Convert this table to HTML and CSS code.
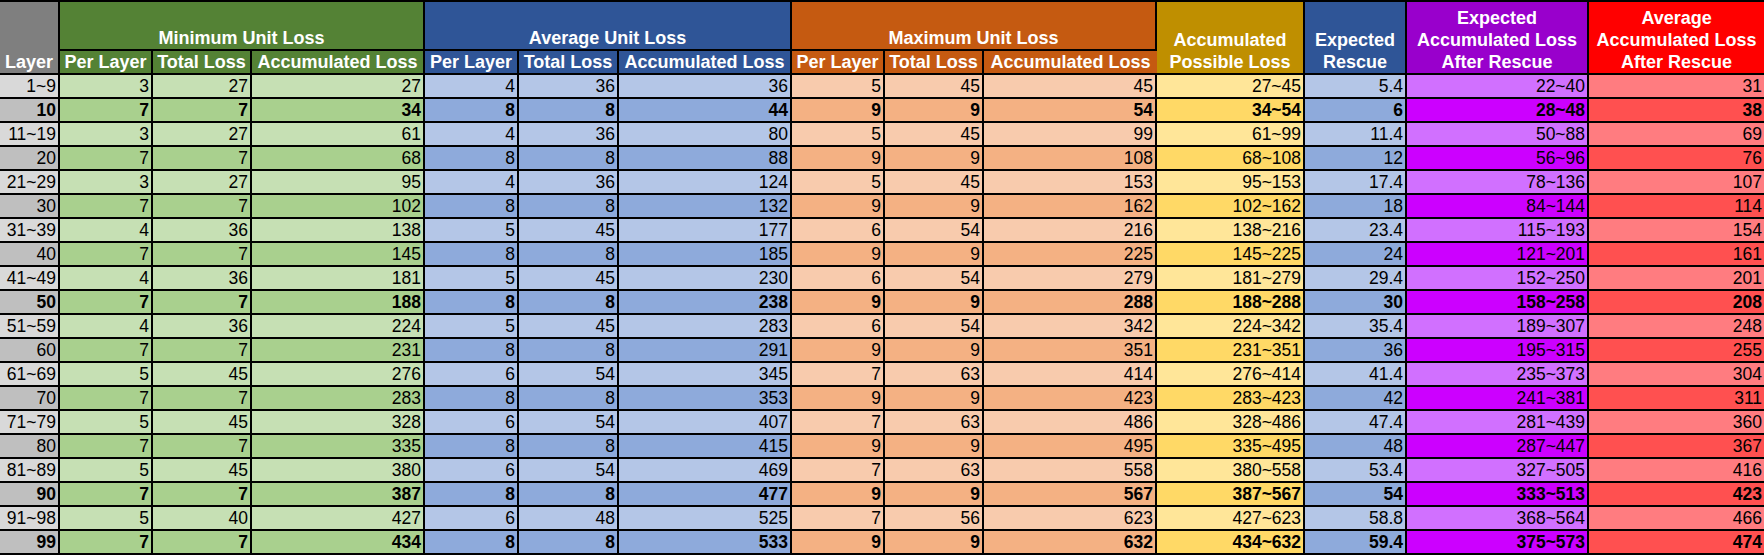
FILE: index.html
```html
<!DOCTYPE html>
<html>
<head>
<meta charset="utf-8">
<link rel="stylesheet" href="styles.css">
</head>
<body>
<table class="t">
<colgroup>
<col style="width:60px"><col style="width:93px"><col style="width:99px"><col style="width:173px">
<col style="width:94px"><col style="width:100px"><col style="width:173px">
<col style="width:93px"><col style="width:99px"><col style="width:173px">
<col style="width:148px"><col style="width:102px"><col style="width:182px"><col style="width:175px">
</colgroup>
<thead>
<tr class="h1">
<th rowspan="2" class="hl">Layer</th>
<th colspan="3" class="hmin">Minimum Unit Loss</th>
<th colspan="3" class="havg">Average Unit Loss</th>
<th colspan="3" class="hmax">Maximum Unit Loss</th>
<th rowspan="2" class="hpos">Accumulated<br>Possible Loss</th>
<th rowspan="2" class="hres">Expected<br>Rescue</th>
<th rowspan="2" class="hexp">Expected<br>Accumulated Loss<br>After Rescue</th>
<th rowspan="2" class="have">Average<br>Accumulated Loss<br>After Rescue</th>
</tr>
<tr class="h2">
<th class="hmin">Per Layer</th><th class="hmin">Total Loss</th><th class="hmin">Accumulated Loss</th>
<th class="havg">Per Layer</th><th class="havg">Total Loss</th><th class="havg">Accumulated Loss</th>
<th class="hmax">Per Layer</th><th class="hmax">Total Loss</th><th class="hmax">Accumulated Loss</th>
</tr>
</thead>
<tbody>
<tr><td>1~9</td><td>3</td><td>27</td><td>27</td><td>4</td><td>36</td><td>36</td><td>5</td><td>45</td><td>45</td><td>27~45</td><td>5.4</td><td>22~40</td><td>31</td></tr>
<tr class="m b"><td>10</td><td>7</td><td>7</td><td>34</td><td>8</td><td>8</td><td>44</td><td>9</td><td>9</td><td>54</td><td>34~54</td><td>6</td><td>28~48</td><td>38</td></tr>
<tr><td>11~19</td><td>3</td><td>27</td><td>61</td><td>4</td><td>36</td><td>80</td><td>5</td><td>45</td><td>99</td><td>61~99</td><td>11.4</td><td>50~88</td><td>69</td></tr>
<tr class="m"><td>20</td><td>7</td><td>7</td><td>68</td><td>8</td><td>8</td><td>88</td><td>9</td><td>9</td><td>108</td><td>68~108</td><td>12</td><td>56~96</td><td>76</td></tr>
<tr><td>21~29</td><td>3</td><td>27</td><td>95</td><td>4</td><td>36</td><td>124</td><td>5</td><td>45</td><td>153</td><td>95~153</td><td>17.4</td><td>78~136</td><td>107</td></tr>
<tr class="m"><td>30</td><td>7</td><td>7</td><td>102</td><td>8</td><td>8</td><td>132</td><td>9</td><td>9</td><td>162</td><td>102~162</td><td>18</td><td>84~144</td><td>114</td></tr>
<tr><td>31~39</td><td>4</td><td>36</td><td>138</td><td>5</td><td>45</td><td>177</td><td>6</td><td>54</td><td>216</td><td>138~216</td><td>23.4</td><td>115~193</td><td>154</td></tr>
<tr class="m"><td>40</td><td>7</td><td>7</td><td>145</td><td>8</td><td>8</td><td>185</td><td>9</td><td>9</td><td>225</td><td>145~225</td><td>24</td><td>121~201</td><td>161</td></tr>
<tr><td>41~49</td><td>4</td><td>36</td><td>181</td><td>5</td><td>45</td><td>230</td><td>6</td><td>54</td><td>279</td><td>181~279</td><td>29.4</td><td>152~250</td><td>201</td></tr>
<tr class="m b"><td>50</td><td>7</td><td>7</td><td>188</td><td>8</td><td>8</td><td>238</td><td>9</td><td>9</td><td>288</td><td>188~288</td><td>30</td><td>158~258</td><td>208</td></tr>
<tr><td>51~59</td><td>4</td><td>36</td><td>224</td><td>5</td><td>45</td><td>283</td><td>6</td><td>54</td><td>342</td><td>224~342</td><td>35.4</td><td>189~307</td><td>248</td></tr>
<tr class="m"><td>60</td><td>7</td><td>7</td><td>231</td><td>8</td><td>8</td><td>291</td><td>9</td><td>9</td><td>351</td><td>231~351</td><td>36</td><td>195~315</td><td>255</td></tr>
<tr><td>61~69</td><td>5</td><td>45</td><td>276</td><td>6</td><td>54</td><td>345</td><td>7</td><td>63</td><td>414</td><td>276~414</td><td>41.4</td><td>235~373</td><td>304</td></tr>
<tr class="m"><td>70</td><td>7</td><td>7</td><td>283</td><td>8</td><td>8</td><td>353</td><td>9</td><td>9</td><td>423</td><td>283~423</td><td>42</td><td>241~381</td><td>311</td></tr>
<tr><td>71~79</td><td>5</td><td>45</td><td>328</td><td>6</td><td>54</td><td>407</td><td>7</td><td>63</td><td>486</td><td>328~486</td><td>47.4</td><td>281~439</td><td>360</td></tr>
<tr class="m"><td>80</td><td>7</td><td>7</td><td>335</td><td>8</td><td>8</td><td>415</td><td>9</td><td>9</td><td>495</td><td>335~495</td><td>48</td><td>287~447</td><td>367</td></tr>
<tr><td>81~89</td><td>5</td><td>45</td><td>380</td><td>6</td><td>54</td><td>469</td><td>7</td><td>63</td><td>558</td><td>380~558</td><td>53.4</td><td>327~505</td><td>416</td></tr>
<tr class="m b"><td>90</td><td>7</td><td>7</td><td>387</td><td>8</td><td>8</td><td>477</td><td>9</td><td>9</td><td>567</td><td>387~567</td><td>54</td><td>333~513</td><td>423</td></tr>
<tr><td>91~98</td><td>5</td><td>40</td><td>427</td><td>6</td><td>48</td><td>525</td><td>7</td><td>56</td><td>623</td><td>427~623</td><td>58.8</td><td>368~564</td><td>466</td></tr>
<tr class="m b"><td>99</td><td>7</td><td>7</td><td>434</td><td>8</td><td>8</td><td>533</td><td>9</td><td>9</td><td>632</td><td>434~632</td><td>59.4</td><td>375~573</td><td>474</td></tr>
</tbody>
</table>
</body>
</html>
```

FILE: styles.css
```css
html, body {
  margin: 0;
  padding: 0;
  background: #ffffff;
}

.t {
  table-layout: fixed;
  width: 1764px;
  border-collapse: separate;
  border-spacing: 0;
  font-family: "Liberation Sans", Arial, sans-serif;
  border-top: 2px solid #000;
}

.t th, .t td {
  border-right: 2px solid #000;
  border-bottom: 2px solid #000;
  padding: 0 2px;
  overflow: hidden;
  white-space: nowrap;
}

.t th:last-child, .t td:last-child {
  border-right: none;
}

.t th {
  color: #ffffff;
  font-weight: bold;
  font-size: 18px;
  line-height: 22px;
  text-align: center;
  vertical-align: bottom;
  padding-bottom: 0;
}

.h1 th {
  height: 47px;
}

.h1 th[rowspan] {
  height: 71px;
}

.h2 th {
  height: 22px;
}

.hl { background: #7f7f7f; padding: 0 1px; }
.hmin { background: #548235; }
.havg { background: #2f5597; }
.hmax { background: #c55a11; }
.hpos { background: #bf8f00; }
.hres { background: #2f5597; }
.hexp { background: #9900cc; }
.have { background: #ff0000; }

.t td {
  height: 22px;
  font-size: 17.5px;
  line-height: 22px;
  text-align: right;
  color: #000;
  vertical-align: middle;
}

.t tr.b td {
  font-weight: bold;
}

.t td:nth-child(1) { background: #d9d9d9; }
.t td:nth-child(n+2):nth-child(-n+4) { background: #c6e0b4; }
.t td:nth-child(n+5):nth-child(-n+7) { background: #b4c6e7; }
.t td:nth-child(n+8):nth-child(-n+10) { background: #f8cbad; }
.t td:nth-child(11) { background: #ffe699; }
.t td:nth-child(12) { background: #b4c6e7; }
.t td:nth-child(13) { background: #d170ff; }
.t td:nth-child(14) { background: #ff7c80; }

.t tr.m td:nth-child(1) { background: #bfbfbf; }
.t tr.m td:nth-child(n+2):nth-child(-n+4) { background: #a9d08e; }
.t tr.m td:nth-child(n+5):nth-child(-n+7) { background: #8eaadb; }
.t tr.m td:nth-child(n+8):nth-child(-n+10) { background: #f4b183; }
.t tr.m td:nth-child(11) { background: #ffd966; }
.t tr.m td:nth-child(12) { background: #8eaadb; }
.t tr.m td:nth-child(13) { background: #cc00ff; }
.t tr.m td:nth-child(14) { background: #ff5050; }
```
